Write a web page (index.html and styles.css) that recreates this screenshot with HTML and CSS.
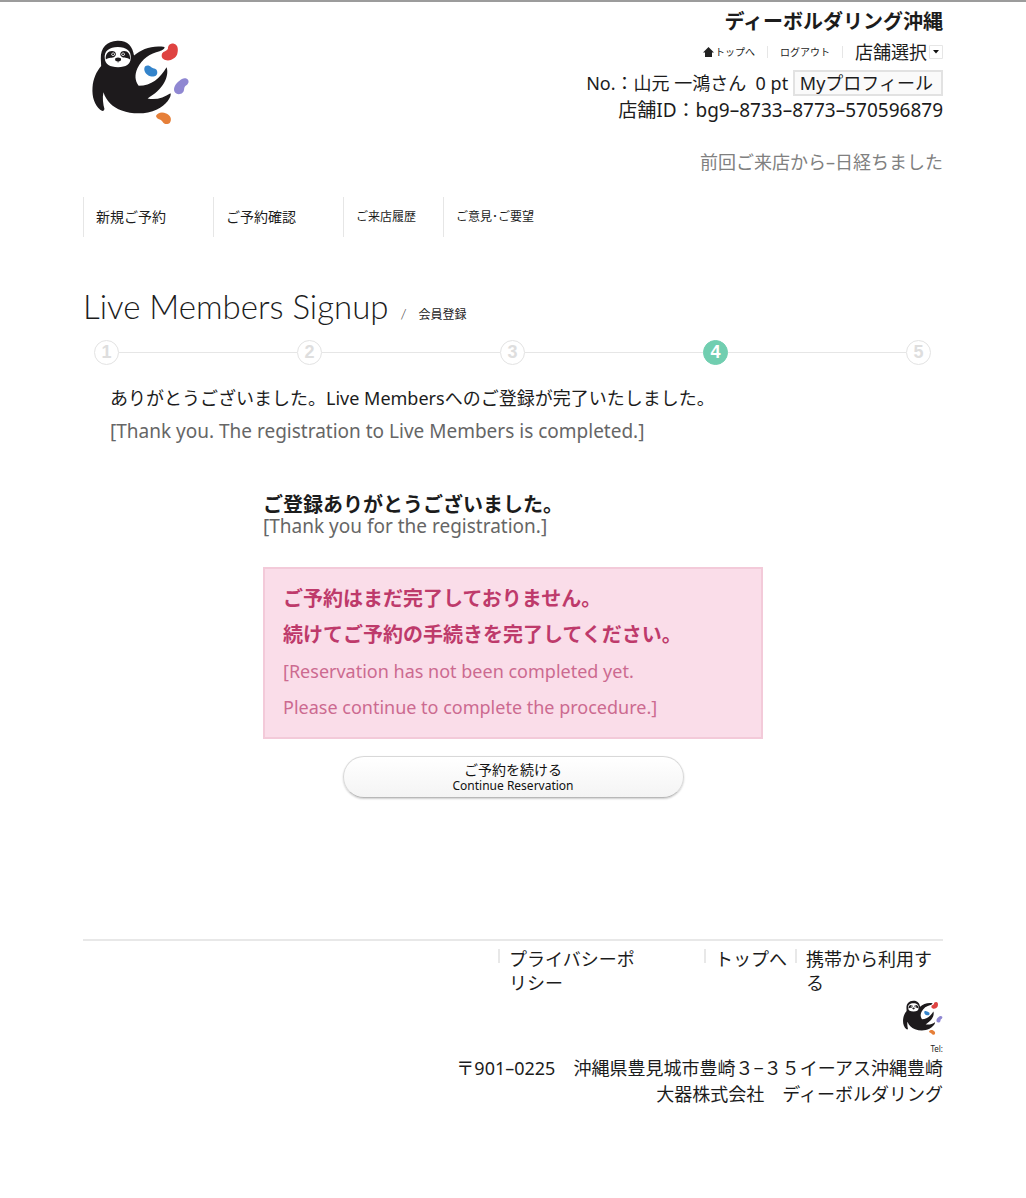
FILE: index.html
```html
<!DOCTYPE html>
<html lang="ja">
<head>
  <meta charset="UTF-8">
  <meta name="viewport" content="width=device-width, initial-scale=1.0">
  <title>Live Members Signup / 会員登録</title>
  <link rel="stylesheet" href="styles.css">
</head>
<body>
  <svg class="defs" width="0" height="0" aria-hidden="true">
    <symbol id="sloth" viewBox="30 25 300 265">
      <path fill="#1d1a1c" d="M62 84C61 51 80 31 112 30C143 29 158 47 162 75C184 56 216 43 254 49C254 56 247 58 239 62C211 69 186 84 172 114C164 132 164 150 176 166C215 166 240 143 260 110C268 131 256 171 210 199L203 204C230 209 252 201 272 188C276 199 258 224 231 237C199 252 158 252 125 240C98 231 78 211 70 185C66 201 69 221 73 236C71 244 65 242 60 238C43 224 35 199 37 171C39 144 48 124 63 106Z"/>
      <path fill="#fff" d="M74 84C71 61 88 49 113 49C139 49 155 61 152 84C151 101 138 110 114 110C89 110 75 101 74 84Z"/>
      <path fill="#1d1a1c" d="M77 87C75 71 84 61 96 61C107 61 111 72 104 78C96 85 87 79 77 87ZM150 87C152 71 143 61 132 61C121 61 117 72 124 78C132 85 141 79 150 87Z"/>
      <circle cx="99" cy="71" r="5" fill="#fff"/>
      <circle cx="129" cy="71" r="5" fill="#fff"/>
      <circle cx="99" cy="71" r="3" fill="#1d1a1c"/>
      <circle cx="129" cy="71" r="3" fill="#1d1a1c"/>
      <ellipse cx="114" cy="87" rx="9" ry="6" fill="#1d1a1c"/>
      <path fill="none" stroke="#1d1a1c" stroke-width="2" d="M114 90V96"/>
      <path fill="#df4341" d="M247 68C251 61 260 62 264 55C264 45 270 38 282 39C295 42 296 57 292 71C287 84 270 93 256 88C246 85 243 77 247 68Z"/>
      <path fill="#3484cb" d="M195 108C201 103 209 105 214 110C221 115 231 113 232 124C233 135 223 140 211 137C199 135 188 119 195 108Z"/>
      <path fill="#8f87d2" d="M299 151C306 143 317 140 324 147C330 155 323 163 316 167C311 172 315 181 308 187C301 194 288 192 284 184C279 173 288 158 299 151Z"/>
      <path fill="#e67f38" d="M228 257C233 246 246 243 259 249C272 254 277 267 270 277C263 284 252 282 248 274C242 265 232 269 228 257Z"/>
    </symbol>
  </svg>

  <div class="container">
    <header class="header">
      <a href="#" class="logo" aria-label="ディーボルダリング沖縄"><svg><use href="#sloth"/></svg></a>
      <div class="account">
        <h1>ディーボルダリング沖縄</h1>
        <div class="tools">
          <a href="#"><svg width="11" height="10" viewBox="0 0 11 10" aria-hidden="true"><path fill="#222" d="M5.5 0 11 5.5H9V10H2V5.5H0Z"/></svg>トップへ</a>
          <a href="#">ログアウト</a>
          <label class="shop">
            <select aria-label="店舗選択">
              <option>店舗選択</option>
            </select>
            <svg width="14" height="14" viewBox="0 0 14 14" aria-hidden="true"><path fill="none" stroke="#e6e6e6" d="M.5.5h13v13H.5z"/><path fill="#111" d="M4 5h6L7 8.500Z"/></svg>
          </label>
        </div>
        <p class="member">No.：山元 一鴻さん&nbsp; 0 pt <a href="#" class="profile">Myプロフィール</a></p>
        <p class="shop-id">店舗ID：bg9–8733–8773–570596879</p>
        <p class="last-visit">前回ご来店から–日経ちました</p>
      </div>
    </header>

    <nav class="nav">
      <a href="#" class="main">新規ご予約</a>
      <a href="#" class="main">ご予約確認</a>
      <a href="#">ご来店履歴</a>
      <a href="#">ご意見･ご要望</a>
    </nav>

    <main>
      <h2 class="title">Live Members Signup <span class="slash">/</span> <span class="sub">会員登録</span></h2>

      <ol class="steps">
        <li><span>1</span></li>
        <li><span>2</span></li>
        <li><span>3</span></li>
        <li class="current" aria-current="step"><span>4</span></li>
        <li><span>5</span></li>
      </ol>

      <div class="lead">
        <p>ありがとうございました。Live Membersへのご登録が完了いたしました。</p>
        <p class="en">[Thank you. The registration to Live Members is completed.]</p>
      </div>

      <section class="result">
        <h3>ご登録ありがとうございました。</h3>
        <p class="en">[Thank you for the registration.]</p>
        <div class="notice">
          <strong>ご予約はまだ完了しておりません。<br>続けてご予約の手続きを完了してください。</strong>
          <p>[Reservation has not been completed yet.<br>Please continue to complete the procedure.]</p>
        </div>
        <button type="button" class="continue">ご予約を続ける<span>Continue Reservation</span></button>
      </section>
    </main>

    <footer class="footer">
      <ul class="footer-links">
        <li class="privacy"><a href="#">プライバシーポリシー</a></li>
        <li><a href="#">トップへ</a></li>
        <li class="mobile"><a href="#">携帯から利用する</a></li>
      </ul>
      <svg class="footer-logo" aria-hidden="true"><use href="#sloth"/></svg>
      <p class="tel">Tel:</p>
      <address>〒901–0225　沖縄県豊見城市豊崎３−３５イーアス沖縄豊崎<br>大器株式会社　ディーボルダリング</address>
    </footer>
  </div>
</body>
</html>
```
FILE: styles.css
```css
* {
  margin: 0;
  padding: 0;
  box-sizing: border-box;
}
body {
  border-top: 2px solid #9c9c9c;
  background: #fff;
  color: #1c1c1c;
  font-family: "Noto Sans", "Noto Sans CJK JP", sans-serif;
  font-size: 18px;
  line-height: 26px;
}
a {
  color: inherit;
  text-decoration: none;
}
.defs {
  display: block;
}
.container {
  max-width: 860px;
  margin: 0 auto;
}

/* header */
.header {
  display: flex;
  justify-content: space-between;
  text-align: right;
}
.logo {
  margin: 37px 0 0 7px;
}
.logo svg {
  display: block;
  width: 100px;
  height: 88px;
}
.account {
  padding-top: 7px;
}
.account h1 {
  font-size: 20px;
  line-height: 26px;
}
.tools {
  display: flex;
  justify-content: flex-end;
  align-items: center;
  height: 34px;
}
.tools a {
  display: flex;
  align-items: center;
  gap: 1px;
  height: 12px;
  padding: 0 12px;
  border-right: 1px solid #e6e6e6;
  font-size: 10px;
}
.shop {
  display: flex;
  align-items: center;
  gap: 2px;
  padding-left: 12px;
}
.shop select {
  appearance: none;
  border: 0;
  background: none;
  color: inherit;
  font: inherit;
}
.member {
  line-height: 28px;
}
.shop-id {
  font-size: 19px;
}
.profile {
  display: inline-block;
  padding: 0 8px 0 5px;
  border: 2px solid #e2e2e2;
  background: #fafafa;
  line-height: 22px;
}
.last-visit {
  margin-top: 26px;
  color: #808080;
}

/* navigation */
.nav {
  display: flex;
  margin-top: 22px;
}
.nav a {
  min-width: 100px;
  padding-left: 12px;
  border-left: 1px solid #e6e6e6;
  font-size: 12px;
  line-height: 40px;
}
.nav .main {
  min-width: 130px;
  font-size: 14px;
}

/* title and steps */
.title {
  margin-top: 49px;
  font-family: Lato, "Noto Sans CJK JP", sans-serif;
  font-size: 33px;
  font-weight: 300;
  line-height: 40px;
}
.title .slash {
  margin: 0 3px;
  font-size: 14px;
}
.title .sub {
  font-size: 12px;
  font-weight: 400;
}
.steps {
  display: flex;
  margin: 5px 12px 0 11px;
  list-style: none;
}
.steps li {
  display: flex;
  flex: 1;
  align-items: center;
}
.steps li:last-child {
  flex: none;
}
.steps li:not(:last-child)::after {
  content: "";
  flex: 1;
  height: 1px;
  background: #e6e6e6;
}
.steps span {
  width: 25px;
  height: 25px;
  border: 1px solid #e3e3e3;
  border-radius: 50%;
  color: #dedede;
  font: bold 18px/23px "Liberation Sans", sans-serif;
  text-align: center;
}
.steps .current span {
  border-color: #71ceb0;
  background: #71ceb0;
  color: #fff;
}

/* messages */
.lead {
  margin: 17px 27px 0;
  line-height: 33px;
}
.en {
  color: #666;
  font-size: 19px;
}
.result {
  max-width: 500px;
  margin: 47px auto 0;
}
.result h3 {
  font-size: 20px;
  line-height: 20px;
}
.result .en {
  line-height: 22px;
}
.notice {
  margin-top: 30px;
  padding: 12px 18px;
  border: 2px solid #f3cad9;
  background: #fadde9;
  color: #cc6a90;
  line-height: 36px;
}
.notice strong {
  color: #be3a6b;
  font-size: 20px;
}
.continue {
  display: block;
  width: 100%;
  max-width: 341px;
  height: 42px;
  margin: 17px auto 0;
  padding-top: 2px;
  border: 1px solid #d8d8d8;
  border-bottom-color: #b8b8b8;
  border-radius: 21px;
  background: linear-gradient(#fff, #f4f4f4);
  box-shadow: 0 1px 2px rgba(0, 0, 0, 0.2);
  color: #111;
  font-family: inherit;
  font-size: 14px;
  line-height: 16px;
  cursor: pointer;
}
.continue span {
  display: block;
  font-size: 12px;
  line-height: 16px;
}

/* footer */
.footer {
  margin-top: 141px;
  padding-bottom: 40px;
  border-top: 2px solid #e8e8e8;
  text-align: right;
}
.footer-links {
  display: flex;
  justify-content: flex-end;
  padding-top: 6px;
  list-style: none;
  line-height: 24px;
  text-align: left;
}
.footer-links li {
  display: flex;
  gap: 9px;
  padding-right: 8px;
}
.footer-links li::before {
  content: "";
  width: 2px;
  height: 14px;
  margin-top: 2px;
  background: #e8e8e8;
}
.footer-links .privacy {
  width: 206px;
  padding-right: 64px;
}
.footer-links .mobile {
  width: 148px;
}
.footer-links a {
  flex: 1;
}
.footer-logo {
  display: block;
  width: 41px;
  height: 36px;
  margin: 5px 0 0 auto;
}
.tel {
  margin-top: 7px;
  font-size: 8px;
  line-height: 12px;
}
address {
  font-style: normal;
}
```
